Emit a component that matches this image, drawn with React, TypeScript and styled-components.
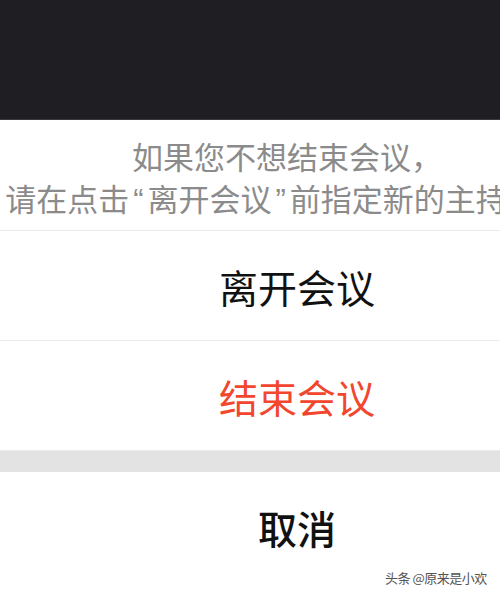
import React from 'react';
import styled, { createGlobalStyle } from 'styled-components';

const GlobalStyle = createGlobalStyle`
    html, body {
        margin: 0;
        padding: 0;
        width: 500px;
        height: 600px;
        overflow: hidden;
        background: #ffffff;
    }
    body {
        font-family: 'Noto Sans CJK SC', 'Noto Sans', sans-serif;
    }
`;

function App() {
    return (
        <>
            <GlobalStyle />
            <Screen>
                <Backdrop />
                <Sheet>
                    <ActionGroup>
                        <Notice>
                            如果您不想结束会议，
                            <br />
                            请在点击<Quote>“</Quote>离开会议<Quote>”</Quote>前指定新的主持人。
                        </Notice>
                        <Action>离开会议</Action>
                        <Action $danger>结束会议</Action>
                    </ActionGroup>
                    <Gap />
                    <Action $bold $last>
                        取消
                    </Action>
                </Sheet>
                <Watermark>头条 @原来是小欢</Watermark>
            </Screen>
        </>
    );
}

export default App;

const Screen = styled.div`
    position: relative;
    width: 574px;
    height: 600px;
    display: flex;
    flex-direction: column;
`;

const Backdrop = styled.div`
    height: 119px;
    background: #1f1f23;
    border-bottom: 1px solid #3a3a3e;
`;

const Sheet = styled.div`
    flex: 1;
    display: flex;
    flex-direction: column;
    background: #ffffff;
`;

const ActionGroup = styled.div`
    display: flex;
    flex-direction: column;
`;

const Notice = styled.div`
    height: 111px;
    box-sizing: border-box;
    padding-top: 15px;
    text-align: center;
    white-space: nowrap;
    font-size: 31px;
    line-height: 42px;
    color: #8b8b8b;
    border-bottom: 1px solid #ebebeb;
`;

const Quote = styled.span`
    font-family: 'Liberation Sans', sans-serif;
    margin: 0 4px;
`;

const Action = styled.div<{ $danger?: boolean; $bold?: boolean; $last?: boolean }>`
    height: ${({ $last }) => ($last ? '127px' : '110px')};
    box-sizing: border-box;
    display: flex;
    align-items: ${({ $last }) => ($last ? 'flex-start' : 'center')};
    padding-top: ${({ $last }) => ($last ? '27px' : '0')};
    justify-content: center;
    padding-left: 20px;
    font-size: 39px;
    font-weight: ${({ $bold }) => ($bold ? 500 : 400)};
    color: ${({ $danger }) => ($danger ? '#f2462f' : '#111111')};
    border-bottom: ${({ $last }) => ($last ? 'none' : '1px solid #ebebeb')};
`;

const Gap = styled.div`
    height: 21px;
    background: #e4e3e4;
`;

const Watermark = styled.div`
    position: absolute;
    left: 385px;
    top: 570px;
    font-size: 13px;
    line-height: 16px;
    color: #555555;
    text-shadow: 0 0 2px #ffffff;
    letter-spacing: -0.5px;
    white-space: nowrap;
`;
